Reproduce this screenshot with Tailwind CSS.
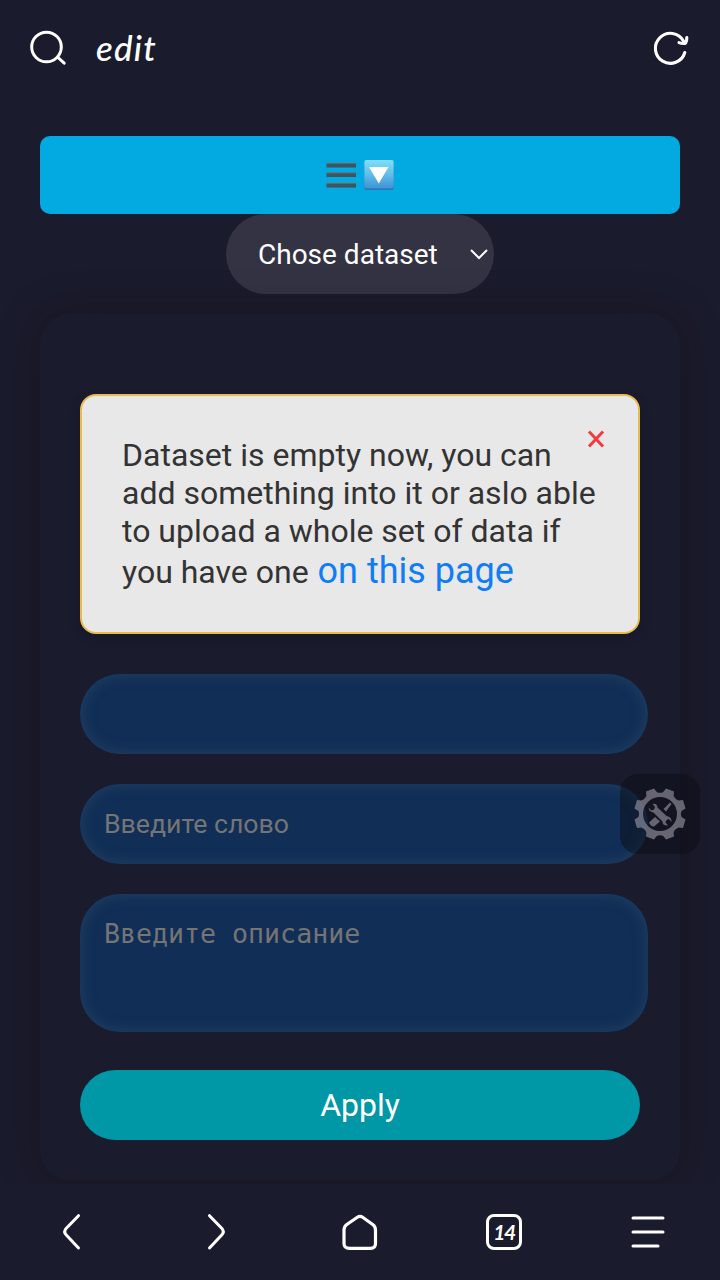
<!DOCTYPE html>
<html lang="en">
<head>
<meta charset="utf-8">
<meta name="viewport" content="width=device-width, initial-scale=1">
<title>edit</title>
<script src="https://cdn.jsdelivr.net/npm/@tailwindcss/browser@4"></script>
</head>
<body class="bg-[#1a1b2d] font-[Roboto,sans-serif] text-white">
<div class="relative flex h-[1280px] w-[720px] flex-col overflow-hidden">
  <header class="flex h-24 shrink-0 items-center px-7">
    <svg class="size-10" viewBox="0 0 40 40" fill="none" stroke="white" stroke-width="3" stroke-linecap="round"><circle cx="18.5" cy="19" r="14.8"/><path d="M30 29.5l6.2 5.7"/></svg>
    <h1 class="ml-[28px] -mt-0.5 font-[Lato,sans-serif] text-[35px] leading-10 font-medium tracking-[1.2px] italic">edit</h1>
    <svg class="ml-auto size-10" viewBox="0 0 40 40" fill="none" stroke="white" stroke-width="3.1" stroke-linecap="round" stroke-linejoin="round"><path d="M32.8 24.5A15 15 0 1 1 31.5 13M34.8 9.5q.2 3.700-1.200 5.700-3 .9-6.600-.6"/></svg>
  </header>

  <main class="flex h-[1088px] shrink-0 flex-col items-center overflow-hidden pt-10">
    <button class="flex h-[78px] w-[640px] shrink-0 items-center justify-center gap-2 rounded-[10px] bg-[#03a9e1]">
      <svg class="h-8 w-[30px]" viewBox="0 0 30 32">
        <defs><linearGradient id="bar" x2="0" y2="1"><stop stop-color="#5f8790"/><stop offset=".4" stop-color="#3b5762"/><stop offset="1" stop-color="#3f5259"/></linearGradient></defs>
        <rect x=".5" y="3.5" width="29.5" height="5" fill="url(#bar)"/><rect x=".5" y="13" width="29.5" height="5" fill="url(#bar)"/><rect x=".5" y="23.5" width="29.5" height="5" fill="url(#bar)"/>
      </svg>
      <svg class="h-8 w-[30px]" viewBox="0 0 30 32">
        <defs><linearGradient id="tile" x2="0" y2="1"><stop stop-color="#7fdef8"/><stop offset=".5" stop-color="#62bee9"/><stop offset="1" stop-color="#3d92d6"/></linearGradient></defs>
        <rect x=".3" y="2" width="29.4" height="29" rx="2" fill="#2679ad"/><rect x=".3" y="1" width="29.4" height="28.5" rx="2" fill="url(#tile)"/><path d="M5 8h19.5L14.8 24.5z" fill="white"/>
      </svg>
    </button>
    <div class="flex h-20 w-[268px] shrink-0 items-center justify-between rounded-full bg-[#343344] pt-0.5 pr-1.5 pl-8">
      <span class="text-[28px] leading-8">Chose dataset</span>
      <svg class="h-3 w-[18px]" viewBox="0 0 18 12" fill="none" stroke="white" stroke-width="2"><path d="M1 1l8 8 8-8"/></svg>
    </div>

    <section class="mt-5 flex h-[866px] w-[640px] shrink-0 flex-col rounded-[30px] bg-[#1a1b2d] px-10 pt-20 shadow-[0_0_40px_rgba(24,12,16,0.4)]">
      <div class="relative h-60 shrink-0 rounded-2xl border-2 border-[#e8bb4c] bg-[#e8e8e8] p-10 text-[#333] shadow-[0_4px_12px_rgba(0,0,0,0.15)]">
        <p class="text-[32px] leading-[38px] whitespace-nowrap">Dataset is empty now, you can<br>add something into it or aslo able<br>to upload a whole set of data if<br>you have one <a class="ml-px text-[36px] leading-[42px] text-[#0f7ef5]">on this page</a></p>
        <svg class="absolute top-[34px] right-[33px] size-[18px]" viewBox="0 0 18 18" fill="none" stroke="#f43a3d" stroke-width="3"><path d="M2 1.5l14 15M16 1.5l-14 15"/></svg>
      </div>
      <div class="mt-10 h-20 w-[568px] shrink-0 rounded-[40px] bg-[#112e56] shadow-[inset_0_0_15px_rgba(60,95,120,0.42)]"></div>
      <div class="mt-[30px] flex h-20 w-[568px] shrink-0 items-center rounded-[40px] bg-[#112e56] px-6 text-[26.67px] text-[#757575] shadow-[inset_0_0_15px_rgba(60,95,120,0.42)]">Введите слово</div>
      <div class="mt-[30px] h-[138px] w-[568px] shrink-0 rounded-[40px] bg-[#112e56] px-6 pt-[21px] font-['DejaVu_Sans_Mono',monospace] text-[26.6px] leading-[38px] text-[#757575] shadow-[inset_0_0_15px_rgba(60,95,120,0.42)]">Введите описание</div>
      <button class="mt-[38px] h-[70px] shrink-0 rounded-full bg-[#0097a7] text-[32px]">Apply</button>
    </section>
  </main>

  <nav class="grid h-24 shrink-0 grid-cols-5 place-items-center bg-[#1a1b2d]">
    <svg class="size-10" viewBox="0 0 40 40" fill="none" stroke="white" stroke-width="3" stroke-linecap="round" stroke-linejoin="round"><path d="M26.5 3.7L14.3 16.3q-3.2 3.3 0 6.8L26.5 36"/></svg>
    <svg class="size-10" viewBox="0 0 40 40" fill="none" stroke="white" stroke-width="3" stroke-linecap="round" stroke-linejoin="round"><path d="M13.500 3.700L25.700 16.300q3.200 3.300 0 6.800L13.500 36"/></svg>
    <svg class="size-10" viewBox="0 0 40 40" fill="none" stroke="white" stroke-width="3.2"><path d="M17 5.5Q20 3.4 23 5.5L32.7 12.5Q35.5 14.5 35.5 18V31.5Q35.5 36.4 30.5 36.4H9.5Q4 36.4 4 31.5V18Q4 14.5 6.8 12.5Z"/></svg>
    <div class="flex h-9 w-9 items-center justify-center rounded-[8px] border-3 border-white font-[Lato,sans-serif] text-[21px] leading-none font-bold tracking-[-1.5px] italic"><span class="-mt-px">14</span></div>
    <svg class="size-10" viewBox="0 0 40 40" fill="none" stroke="white" stroke-width="3" stroke-linecap="round"><path d="M5 6h30M5 20h30M5 34h25"/></svg>
  </nav>

  <div class="absolute top-[774px] left-[620px] flex size-20 items-center justify-center rounded-[18px] bg-[#0c0d15]/50">
    <svg class="size-[54px] opacity-55" viewBox="-27 -27 54 54">
      <g fill="#aaa8b4">
        <path fill-rule="evenodd" d="M-6-25.5L-14-22.5 -13.6-18Q-15.5-14.5-18.5-13.5L-23-14 -25.5-5.5 -21.5-3Q-20.2 0-21.5 3L-25.5 5.5 -23 14 -18.5 13.5Q-15 15-13.6 18.5L-14 22.5 -6 25.5 -3 21.8Q0 20.7 3 21.8L6 25.5 14 22.5 13.6 18.5Q15 15 18.5 13.5L23 14 25.5 5.5 21.5 3Q20.2 0 21.5-3L25.5-5.5 23-14 18.5-13.5Q15-15 13.6-18L14-22.5 6-25.5 3-21.8Q0-20.7-3-21.8ZM17 0A17 17 0 1 1-17 0A17 17 0 1 1 17 0Z"/>
        <path d="M-7.5-10l2.500 3-1 2.500-2.500 1-3-3Q-11-2-6.500-1.500L2.500 7.500Q2.500 12 8 11.500L5.500 8.500l1-2.500 2.500-1 2.500 3Q12 3 6.500 2L-2.500-6.500Q-3-11-7.500-10ZM10-11.500l1.500 1.500-5.500 7.500-2.500-2.500ZM-5 3L0 7.500-6 12.500Q-9 13-11 8.500Z"/>
      </g>
    </svg>
  </div>
</div>
</body>
</html>
